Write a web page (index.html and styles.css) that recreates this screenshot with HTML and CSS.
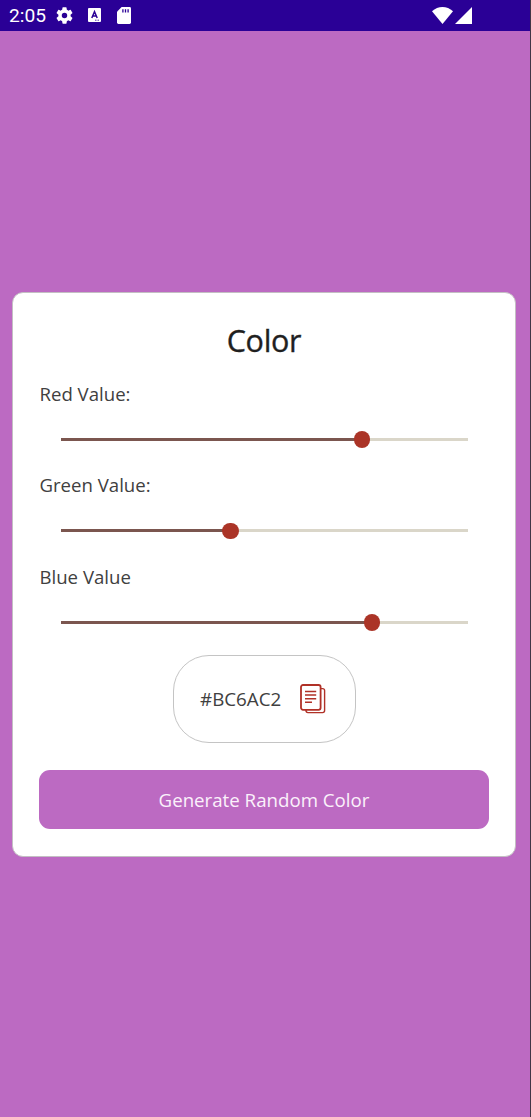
FILE: index.html
```html
<!DOCTYPE html>
<html lang="en">
<head>
<meta charset="utf-8">
<title>Color</title>
<link rel="stylesheet" href="styles.css">
</head>
<body>
<div class="screen">
  <header class="status">
    <span class="clock">2:05</span>
    <svg class="gear" viewBox="2 2 20 20"><path fill="#fff" d="M19.14 12.94c.04-.3.06-.61.06-.94 0-.32-.02-.64-.07-.94l2.03-1.58a.49.49 0 0 0 .12-.61l-1.92-3.32a.49.49 0 0 0-.59-.22l-2.39.96a7 7 0 0 0-1.62-.94l-.36-2.54a.48.48 0 0 0-.48-.41h-3.84a.47.47 0 0 0-.47.41l-.36 2.54c-.59.24-1.13.57-1.62.94l-2.39-.96a.48.48 0 0 0-.59.22L2.74 8.87a.47.47 0 0 0 .12.61l2.03 1.58a6 6 0 0 0-.02 1.88l-2.03 1.58a.49.49 0 0 0-.12.61l1.92 3.32c.12.22.37.29.59.22l2.39-.96c.5.38 1.03.7 1.62.94l.36 2.54c.05.24.24.41.48.41h3.84c.24 0 .44-.17.47-.41l.36-2.54a7 7 0 0 0 1.62-.94l2.39.96c.22.08.47 0 .59-.22l1.92-3.32a.47.47 0 0 0-.12-.61zM12 15.2a3.2 3.2 0 1 1 0-6.4 3.2 3.2 0 0 1 0 6.4z"/></svg>
    <svg class="keyboard" viewBox="0 0 13 14"><rect width="13" height="14" rx="1" fill="#fff"/><path d="M3.8 10 6.5 3.6 9.2 10M4.8 8h3.4" fill="none" stroke="#2a0096" stroke-width="1.5"/><path d="M7 12.2h4" stroke="#2a0096" stroke-width=".8" stroke-dasharray="1 .5"/></svg>
    <svg class="sdcard" viewBox="0 0 14 17"><path fill="#fff" d="M4.6 0H12.6Q14 0 14 1.4V15.6Q14 17 12.6 17H1.4Q0 17 0 15.6V4.8z"/><path d="M5.9 2.2v3.4M8.5 2.2v3.4M11.1 2.2v3.4" stroke="#2a0096" stroke-width="1.3"/></svg>
    <svg class="wifi" viewBox="0 0 21 17"><path fill="#fff" d="M0 4.3C6-1.4 15-1.4 21 4.3L10.5 17z"/></svg>
    <svg class="signal" viewBox="0 0 17 17"><path fill="#fff" d="M17 0v17H0z"/></svg>
  </header>
  <main class="card">
    <h1 class="title">Color</h1>
    <div class="controls">
      <div class="control"><div class="label">Red Value:</div><div class="slider"><div class="fill" style="width:74%"></div><div class="thumb"></div><div class="rest"></div></div></div>
      <div class="control"><div class="label">Green Value:</div><div class="slider"><div class="fill" style="width:41.7%"></div><div class="thumb"></div><div class="rest"></div></div></div>
      <div class="control"><div class="label">Blue Value</div><div class="slider"><div class="fill" style="width:76.4%"></div><div class="thumb"></div><div class="rest"></div></div></div>
    </div>
    <div class="chip">
      <span class="hex">#BC6AC2</span>
      <svg class="copy" viewBox="0 0 26 30"><g fill="none" stroke="#b03127"><rect x="1" y="1" width="19.6" height="24.8" rx="2" stroke-width="1.8"/><path d="M21 4.6h1.6q2 0 2 2v20q0 2-2 2H8q-2 0-2-2V26" stroke-width="1.4"/><path d="M5 7.5h11.2M5 11h11.2M5 14.8h11.2M5 18.3h7" stroke-width="1.6"/></g></svg>
    </div>
    <button class="generate">Generate Random Color</button>
  </main>
</div>
</body>
</html>
```
FILE: styles.css
```css
* { box-sizing: border-box; }
body {
  margin: 0;
  background: #bc6ac2;
  font-family: "Open Sans", "Noto Sans", sans-serif;
}
.screen {
  width: 531px;
  height: 1117px;
  border-right: 1px solid #413546;
  overflow: hidden;
}
.status {
  display: flex;
  align-items: center;
  height: 30.5px;
  padding-left: 9px;
  background: #2a0096;
  color: #fff;
}
.clock {
  width: 47px;
  padding-top: 2px;
  font: 19.2px/30px Roboto, sans-serif;
}
.gear { width: 17px; height: 17px; }
.keyboard { width: 13px; height: 14px; margin-left: 14.5px; }
.sdcard { width: 14px; height: 17px; margin-left: 16.5px; }
.wifi { width: 21px; height: 17px; margin-left: 301px; }
.signal { width: 17px; height: 17px; margin-left: 1.5px; }
.card {
  width: 504px;
  height: 564.5px;
  margin: 261.5px 0 0 12px;
  padding: 23px 26px 0;
  border: 1px solid #c3bfc3;
  border-radius: 11px;
  background: #fff;
}
.title {
  margin: 0;
  height: 65px;
  text-align: center;
  font-size: 30.5px;
  font-weight: 500;
  line-height: 48px;
  letter-spacing: -0.3px;
  color: #1f1f1f;
  -webkit-text-stroke: 0.35px #1f1f1f;
}
.controls { display: flex; flex-direction: column; gap: 2.3px; }
.label {
  height: 26px;
  padding-left: 0.5px;
  font-size: 18.6px;
  line-height: 26px;
  color: #404040;
}
.slider {
  display: flex;
  align-items: center;
  width: 407px;
  height: 63px;
  padding-top: 2.4px;
  margin-left: 22px;
}
.fill { height: 3px; background: #7b564f; flex: none; }
.rest { height: 3px; background: #dad6c9; flex: 1; }
.thumb {
  flex: none;
  width: 16.5px;
  height: 16.5px;
  margin: 0 -8.25px;
  border-radius: 50%;
  background: #ab3427;
  z-index: 1;
}
.chip {
  display: flex;
  align-items: center;
  width: 183px;
  height: 88px;
  margin: 2.4px auto 0;
  padding-left: 26.5px;
  border: 1px solid #c4c4c4;
  border-radius: 36px;
}
.hex {
  width: 99.5px;
  font-size: 18.8px;
  line-height: 26px;
  color: #404040;
}
.copy { width: 26px; height: 30px; }
.generate {
  display: block;
  width: 450px;
  height: 59px;
  margin-top: 27px;
  padding: 0;
  border: 0;
  border-radius: 11px;
  background: #bc6ac2;
  color: #fbf1fb;
  font: 18.7px/59px "Open Sans", "Noto Sans", sans-serif;
}
```
